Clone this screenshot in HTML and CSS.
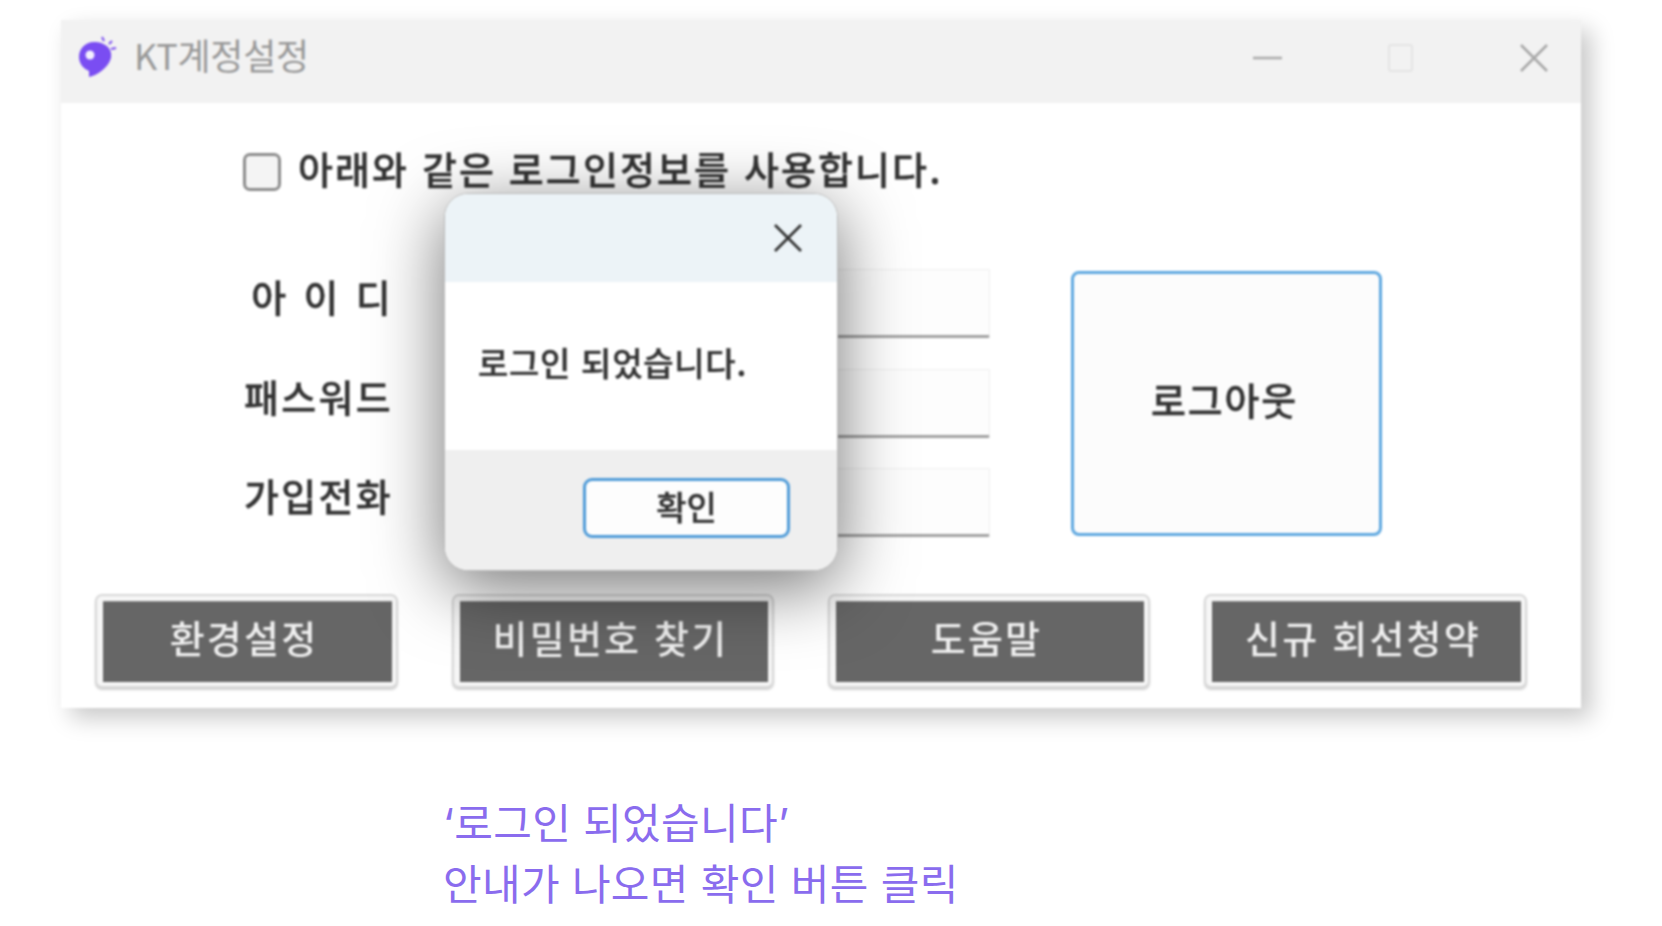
FILE: index.html
```html
<!DOCTYPE html>
<html lang="ko">
<head>
  <meta charset="UTF-8" />
  <title>KT계정설정</title>
  <link rel="stylesheet" href="styles.css">
</head>
<body>
  <div class="window">
    <div class="titlebar">
      <svg class="logo" viewBox="0 0 40 44" width="40" height="44">
        <path d="M16 7C7 7 1 14 1 22c0 7 5 12 10 14l0 6c6-1 19-8 22-19C35 13 26 7 16 7z" fill="#7a4df2"/>
        <circle cx="12" cy="20" r="4.5" fill="#f4f0ff"/>
        <path d="M26 6l-2-4M31 9l3-3M33 14l5-1" stroke="#7a4df2" stroke-width="2" fill="none"/>
      </svg>
      <span class="title">KT계정설정</span>
      <div class="win-btns">
        <svg viewBox="0 0 30 30" width="30" height="30"><path d="M0 15h29" stroke="#aaa" stroke-width="2.5"/></svg>
        <svg viewBox="0 0 30 30" width="30" height="30"><rect x="3" y="2" width="23" height="26" rx="2" fill="none" stroke="#e4e4e4" stroke-width="2"/></svg>
        <svg viewBox="0 0 30 30" width="30" height="30"><path d="M2 2l26 26M28 2L2 28" stroke="#a8a8a8" stroke-width="2.5"/></svg>
      </div>
    </div>

    <div class="content">
      <label class="check-row">
        <span class="checkbox"></span>
        <span class="check-text">아래와 같은 로그인정보를 사용합니다.</span>
      </label>

      <div class="form">
        <span class="field-label spaced">아 이 디</span>
        <div class="input"></div>
        <button class="logout" type="button">로그아웃</button>
        <span class="field-label">패스워드</span>
        <div class="input"></div>
        <span class="field-label">가입전화</span>
        <div class="input"></div>
      </div>

      <div class="actions">
        <button class="dark-btn" type="button"><span>환경설정</span></button>
        <button class="dark-btn" type="button"><span>비밀번호 찾기</span></button>
        <button class="dark-btn" type="button"><span>도움말</span></button>
        <button class="dark-btn" type="button"><span>신규 회선청약</span></button>
      </div>
    </div>

    <div class="dialog">
      <div class="dialog-head">
        <svg viewBox="0 0 30 30" width="30" height="30"><path d="M2 2l26 26M28 2L2 28" stroke="#333" stroke-width="2.8"/></svg>
      </div>
      <div class="dialog-body">로그인 되었습니다.</div>
      <div class="dialog-foot">
        <button class="ok-btn" type="button">확인</button>
      </div>
    </div>
  </div>

  <p class="caption">‘로그인 되었습니다’<br>안내가 나오면 확인 버튼 클릭</p>
</body>
</html>
```

FILE: styles.css
```css
* {
  box-sizing: border-box;
}
body {
  margin: 0;
  padding: 20px 0 0 61px;
  background: #fff;
  font-family: "Noto Sans CJK KR", "Noto Sans", sans-serif;
  overflow: hidden;
}
button {
  font-family: inherit;
  padding: 0;
  cursor: pointer;
}

.window {
  position: relative;
  width: 1520px;
  height: 688px;
  background: #fff;
  box-shadow: 10px 10px 22px rgba(0, 0, 0, 0.22);
  filter: blur(1.1px);
}

.titlebar {
  display: flex;
  align-items: center;
  height: 83px;
  padding: 0 0 10px 17px;
  background: #f2f2f2;
}
.logo {
  margin-right: 16px;
}
.title {
  padding-bottom: 5px;
  font-size: 36px;
  color: #999;
  letter-spacing: -0.3px;
}
.win-btns {
  display: flex;
  gap: 103px;
  margin-left: auto;
  margin-right: 32px;
  padding-top: 3px;
}

.content {
  padding: 50px 0 21px 34px;
}

.check-row {
  display: flex;
  align-items: center;
  gap: 17px;
  height: 38px;
  margin-left: 148px;
  font-size: 38px;
  font-weight: 500;
  color: #333;
  letter-spacing: 2.1px;
  -webkit-text-stroke: 0.4px #333;
}
.check-text {
  padding-bottom: 9px;
}
.checkbox {
  width: 38px;
  height: 38px;
  border: 3px solid #8c8c8c;
  border-radius: 7px;
  background: #f4f4f4;
}

.form {
  display: grid;
  grid-template-columns: 147px 519px 311px;
  grid-auto-rows: 69px;
  column-gap: 81px;
  row-gap: 30.5px;
  margin: 78px 0 57px 148px;
}
.field-label {
  align-self: center;
  margin-right: -3px;
  padding-bottom: 16px;
  text-align: right;
  font-size: 38px;
  font-weight: 500;
  color: #333;
  letter-spacing: 2.3px;
  white-space: nowrap;
  -webkit-text-stroke: 0.4px #333;
}
.spaced {
  word-spacing: 2px;
}
.input {
  background: #fdfdfd;
  border: 1px solid #eee;
  border-bottom: 3px solid #a2a2a2;
  border-radius: 2px;
}
.logout {
  grid-column: 3;
  grid-row: 1 / span 3;
  align-self: center;
  height: 265px;
  padding: 0 4px 10px 0;
  background: #fcfcfc;
  border: 3px solid #5fa8e0;
  border-radius: 8px;
  font-size: 38px;
  font-weight: 500;
  color: #333;
  letter-spacing: 1.8px;
  -webkit-text-stroke: 0.4px #333;
}

.actions {
  display: grid;
  grid-template-columns: 303px 322px 322px 323px;
  column-gap: 54px;
}
.dark-btn {
  height: 94px;
  padding: 5px 4px 4px 6px;
  background: #f6f6f6;
  border: 2px solid #d8d8d8;
  border-radius: 7px;
  box-shadow: 0 2px 2px rgba(0, 0, 0, 0.18);
}
.dark-btn span {
  display: flex;
  align-items: center;
  justify-content: center;
  height: 100%;
  padding: 0 7px 12px 0;
  background: #666;
  border-top: 1px solid #8a8a8a;
  color: #efefef;
  font-size: 38px;
  font-weight: 500;
  letter-spacing: 2.2px;
}

/* popup sits over the form */
.dialog {
  position: absolute;
  left: 383px;
  top: 173px;
  width: 394px;
  height: 378px;
  display: flex;
  flex-direction: column;
  overflow: hidden;
  background: #fff;
  border: 1px solid #bbb;
  border-radius: 24px;
  box-shadow: 0 16px 70px rgba(0, 0, 0, 0.55);
}
.dialog-head {
  display: flex;
  align-items: center;
  justify-content: flex-end;
  height: 88px;
  padding: 0 34px 0 0;
  background: #ecf3f7;
}
.dialog-body {
  display: flex;
  align-items: center;
  height: 168px;
  padding: 0 0 8px 33px;
  font-size: 33px;
  font-weight: 500;
  color: #333;
  letter-spacing: 0.7px;
  -webkit-text-stroke: 0.4px #333;
}
.dialog-foot {
  flex: 1;
  display: flex;
  justify-content: flex-end;
  padding: 28px 47px 0 0;
  background: #efefef;
}
.ok-btn {
  width: 207px;
  height: 60px;
  padding-bottom: 4px;
  background: #fdfdfd;
  border: 3px solid #4f9bd8;
  border-radius: 9px;
  font-size: 33px;
  font-weight: 500;
  color: #333;
  -webkit-text-stroke: 0.4px #333;
}

.caption {
  margin: 85px 0 0 382px;
  font-family: Inter, "Noto Sans CJK KR", sans-serif;
  font-size: 42px;
  line-height: 61px;
  letter-spacing: 0.3px;
  color: #8a6cee;
}
```
